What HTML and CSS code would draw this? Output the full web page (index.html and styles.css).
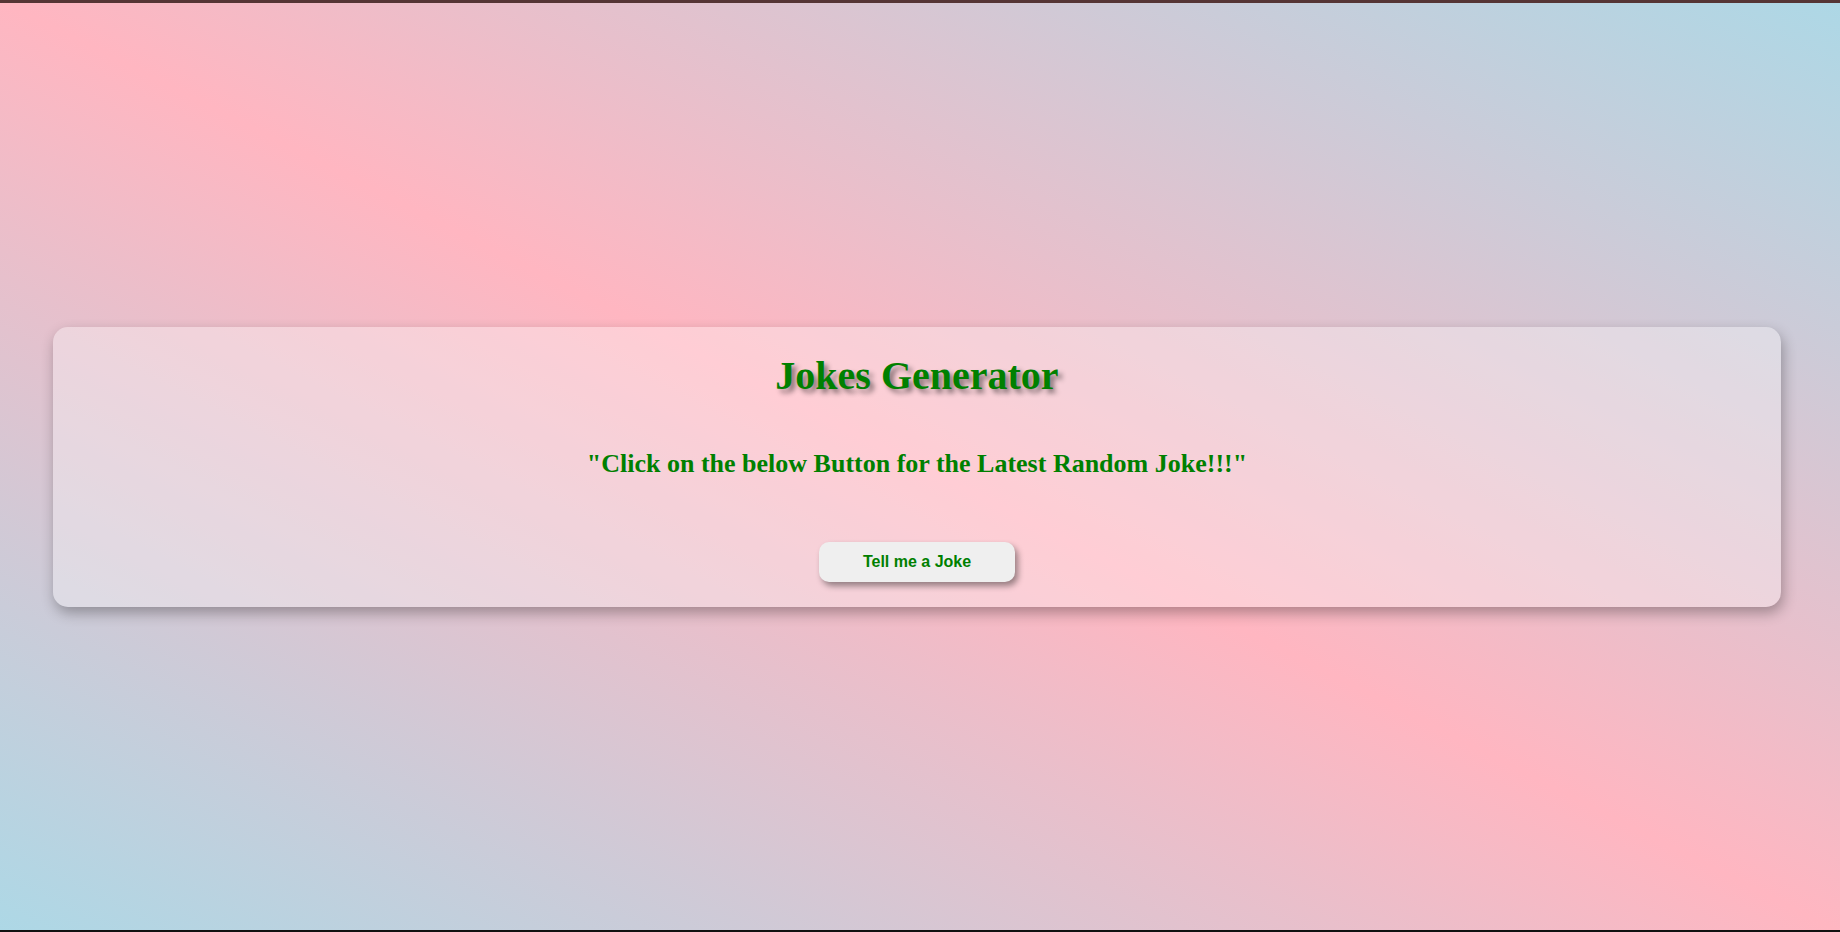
FILE: index.html
```html
<!DOCTYPE html>
<html lang="en">
<head>
<meta charset="utf-8">
<title>Jokes Generator</title>
<link rel="stylesheet" href="styles.css">
</head>
<body>
  <main class="card">
    <h1 class="title">Jokes Generator</h1>
    <h2 class="subtitle">"Click on the below Button for the Latest Random Joke!!!"</h2>
    <button class="joke-btn" type="button">Tell me a Joke</button>
  </main>
</body>
</html>
```

FILE: styles.css
```css
html {
  height: 100%;
}

body {
  margin: 0;
  height: 932px;
  box-sizing: border-box;
  border-top: 3px solid #553535;
  border-bottom: 2px solid #111;
  background: linear-gradient(to top right, #add8e6, #ffb6c1, #add8e6);
  display: flex;
  align-items: center;
  font-family: "Liberation Serif", "Times New Roman", serif;
}

.card {
  box-sizing: border-box;
  width: 1728px;
  height: 280px;
  margin-left: 53px;
  padding: 26px 20px 25px;
  border-radius: 15px;
  background: rgba(255, 255, 255, 0.32);
  box-shadow: 2px 6px 14px rgba(0, 0, 0, 0.3);
  display: flex;
  flex-direction: column;
  align-items: center;
}

.title {
  margin: 0;
  font-size: 40px;
  font-weight: bold;
  line-height: 46px;
  color: #008000;
  text-shadow: 4px 4px 5px rgba(0, 0, 0, 0.45);
}

.subtitle {
  margin: 50px 0 0;
  font-size: 26px;
  font-weight: bold;
  line-height: 30px;
  color: #008000;
}

.joke-btn {
  margin-top: 63px;
  width: 196px;
  height: 40px;
  border: none;
  border-radius: 10px;
  background: #efefef;
  box-shadow: 3px 4px 6px rgba(0, 0, 0, 0.4);
  color: #008000;
  font-family: "Liberation Sans", Arial, sans-serif;
  font-weight: bold;
  font-size: 16px;
  cursor: pointer;
}
```
